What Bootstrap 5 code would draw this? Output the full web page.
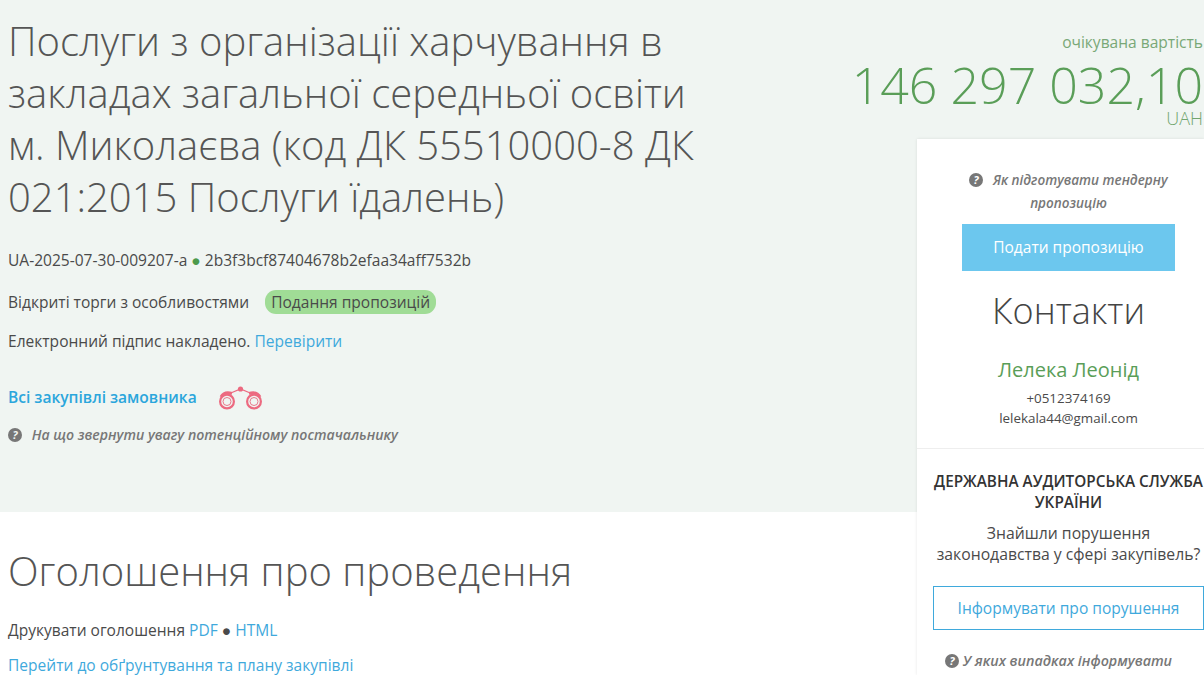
<!DOCTYPE html>
<html lang="uk">
<head>
    <meta charset="UTF-8">
    <meta name="viewport" content="width=device-width, initial-scale=1.0">
    <title>Оголошення про проведення</title>
    <link href="https://cdn.jsdelivr.net/npm/bootstrap@5.3.0/dist/css/bootstrap.min.css" rel="stylesheet">
    <style>
        html, body { height: 675px; overflow: hidden; }
        body { font-family: "Open Sans", "Noto Sans", sans-serif; font-size: 15.55px; color: #4a4a4a; background: #fff; }
        a { color: #3fa9dc; text-decoration: none; }
        .tender-hero { height: 512px; background: #f0f5f2; padding: 15px 1px 0 8px; }
        .tender-info { width: 700px; }
        .tender-title { font-weight: 300; font-size: 40px; line-height: 52px; color: #555; margin: 0 0 27px; }
        .info-line { line-height: 20px; margin: 0 0 22px; }
        .info-line-tight { margin-bottom: 19px; }
        .status-pill { background: #a0dc96; border-radius: 11px; padding: 1px 6px; margin-left: 12px; }
        .green-dot { color: #4c9a4c; }
        .buyer-line { margin: 35px 0 13px; height: 24px; }
        .buyer-link { font-weight: 600; color: #2ba6dc; }
        .hint-line { font-style: italic; font-weight: 600; color: #777; font-size: 14.08px; line-height: 23px; }
        .hint-icon { width: 14px; height: 14px; vertical-align: -2px; }
        .hint-gap { margin-left: 6px; }
        .price-box { text-align: right; margin-top: 17px; }
        .price-label { color: #79a877; line-height: 20px; }
        .price-sum { color: #5a9e58; font-weight: 300; font-size: 50.1px; line-height: 62px; white-space: nowrap; margin-top: 2px; }
        .price-cur { color: #72a570; font-size: 18px; line-height: 18px; margin-top: -7px; font-weight: 300; }
        .lower-main { width: 917px; padding: 35px 8px 0; flex: none; }
        .lower-title { font-weight: 300; font-size: 40px; line-height: 48px; color: #555; margin: 0 0 25px; }
        .lower-line { line-height: 20px; margin: 0 0 15px; }
        .side-panel { width: 287px; flex: none; margin-top: -373px; height: 536px; background: #fff; box-shadow: 0 0 3px rgba(0,0,0,.1); position: relative; text-align: center; }
        .side-top { padding: 30px 29px 0 45px; height: 310px; border-bottom: 1px solid #eee; }
        .side-top .hint-line { font-size: 13.5px; }
        .submit-btn { display: block; background: #6cc7ee; color: #fff; font-size: 15.5px; line-height: 47px; height: 47px; margin-top: 9px; border-radius: 0; border: 0; width: 213px; padding: 0; }
        .contacts-head { font-weight: 300; font-size: 36px; line-height: 46px; color: #444; margin: 17px 0 0; }
        .contact-name { color: #5a9e58; font-size: 20px; line-height: 24px; margin: 24px 0 6px; }
        .contact-line { font-size: 13.4px; line-height: 20px; }
        .side-audit { padding: 22px 0 0 16px; }
        .audit-head { font-weight: 600; font-size: 15.3px; line-height: 21px; color: #333; text-transform: uppercase; white-space: nowrap; }
        .audit-text { font-size: 15.75px; line-height: 21px; margin-top: 10px; white-space: nowrap; }
        .report-btn { display: block; border: 1px solid #3fa9dc; color: #3fa9dc; font-size: 15.55px; line-height: 42px; height: 44px; margin-top: 21px; border-radius: 0; padding: 0; background: #fff; }
        .hint-tail { font-size: 14.3px; margin: 19px 20px 0 0; }
    </style>
</head>
<body>
    <div class="tender-hero d-flex justify-content-between">
        <div class="tender-info">
            <h1 class="tender-title">Послуги з організації харчування в закладах загальної середньої освіти м. Миколаєва (код ДК 55510000-8 ДК 021:2015 Послуги їдалень)</h1>
            <p class="info-line">UA-2025-07-30-009207-a <span class="green-dot">●</span> 2b3f3bcf87404678b2efaa34aff7532b</p>
            <p class="info-line info-line-tight">Відкриті торги з особливостями <span class="status-pill">Подання пропозицій</span></p>
            <p class="info-line">Електронний підпис накладено. <a href="#">Перевірити</a></p>
            <div class="buyer-line d-flex align-items-center gap-3">
                <a class="buyer-link" href="#">Всі закупівлі замовника</a>
                <svg class="ms-1" width="46" height="24" viewBox="0 0 46 24" fill="none" stroke="#ec6a80">
                    <path d="M15 6.5 L23.5 3 L32 6.5" stroke-width="1.3"/>
                    <path d="M4 11 Q7.5 5 15 7.5 M43 11 Q39.5 5 32 7.5" stroke-width="3"/>
                    <circle cx="23.5" cy="3" r="2.6" fill="#ec6a80" stroke="none"/>
                    <circle cx="10" cy="15.5" r="6.9" stroke-width="2.2"/>
                    <circle cx="10" cy="15.5" r="4" stroke="#e8798b" stroke-width="1"/>
                    <circle cx="37" cy="15.5" r="6.9" stroke-width="2.2"/>
                    <circle cx="37" cy="15.5" r="4" stroke="#e8798b" stroke-width="1"/>
                </svg>
            </div>
            <div class="hint-line">
                <svg class="hint-icon" viewBox="0 0 14 14"><circle cx="7" cy="7" r="7" fill="#777"/><text x="7" y="11" font-size="11" font-weight="700" font-family="Open Sans" fill="#f0f5f2" text-anchor="middle">?</text></svg>
                <span class="hint-gap">На що звернути увагу потенційному постачальнику</span>
            </div>
        </div>
        <div class="price-box">
            <div class="price-label">очікувана вартість</div>
            <div class="price-sum">146 297 032,10</div>
            <div class="price-cur">UAH</div>
        </div>
    </div>
    <div class="d-flex">
        <div class="lower-main">
            <h2 class="lower-title">Оголошення про проведення</h2>
            <p class="lower-line">Друкувати оголошення <a href="#">PDF</a> ● <a href="#">HTML</a></p>
            <p class="lower-line"><a href="#">Перейти до обґрунтування та плану закупівлі</a></p>
        </div>
        <aside class="side-panel">
            <div class="side-top">
                <div class="hint-line">
                    <svg class="hint-icon" viewBox="0 0 14 14"><circle cx="7" cy="7" r="7" fill="#777"/><text x="7" y="11" font-size="11" font-weight="700" font-family="Open Sans" fill="#fff" text-anchor="middle">?</text></svg>
                    <span class="hint-gap">Як підготувати тендерну пропозицію</span>
                </div>
                <button class="submit-btn" type="button">Подати пропозицію</button>
                <div class="contacts-head">Контакти</div>
                <div class="contact-name">Лелека Леонід</div>
                <div class="contact-line">+0512374169</div>
                <div class="contact-line">lelekala44@gmail.com</div>
            </div>
            <div class="side-audit">
                <div class="audit-head">Державна аудиторська служба<br>України</div>
                <div class="audit-text">Знайшли порушення<br>законодавства у сфері закупівель?</div>
                <a class="report-btn" href="#">Інформувати про порушення</a>
                <div class="hint-line hint-tail">
                    <svg class="hint-icon" viewBox="0 0 14 14"><circle cx="7" cy="7" r="7" fill="#777"/><text x="7" y="11" font-size="11" font-weight="700" font-family="Open Sans" fill="#fff" text-anchor="middle">?</text></svg>
                    <span>У яких випадках інформувати</span>
                </div>
            </div>
        </aside>
    </div>
    <script src="https://cdn.jsdelivr.net/npm/bootstrap@5.3.0/dist/js/bootstrap.bundle.min.js"></script>
</body>
</html>
